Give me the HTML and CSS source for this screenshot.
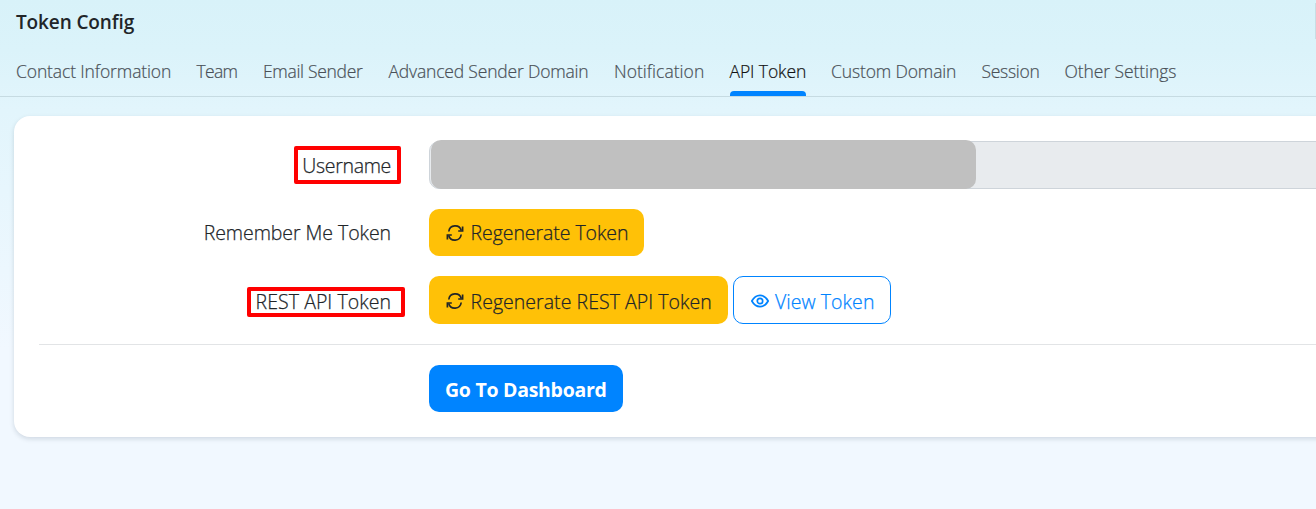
FILE: index.html
```html
<!DOCTYPE html>
<html lang="en">
<head>
<meta charset="utf-8">
<title>Token Config</title>
<link rel="stylesheet" href="styles.css">
</head>
<body>
<header class="header">
  <h1 class="title">Token Config</h1>
  <span class="header-action"></span>
</header>
<nav class="tabs">
  <a class="tab tab-contact">Contact Information</a>
  <a class="tab tab-team">Team</a>
  <a class="tab tab-email">Email Sender</a>
  <a class="tab tab-advanced">Advanced Sender Domain</a>
  <a class="tab tab-notification">Notification</a>
  <a class="tab tab-api active">API Token</a>
  <a class="tab tab-custom">Custom Domain</a>
  <a class="tab tab-session">Session</a>
  <a class="tab tab-other">Other Settings</a>
</nav>
<main class="card">
  <div class="row row-user">
    <span class="label label-user">Username<span class="mark mark-user"></span></span>
    <div class="input"><span class="mask"></span></div>
  </div>
  <div class="row row-remember">
    <span class="label label-remember">Remember Me Token</span>
    <button class="btn warning btn-remember"><svg class="icon" viewBox="0 0 18 16"><path d="M2.800 6.500A6.400 6.400 0 0 1 15.300 5.600M15.200 9.500A6.400 6.400 0 0 1 2.700 10.400"/><path d="M16.600 1.600V6H12.200M1.400 14.400V10H5.800"/></svg><span>Regenerate Token</span></button>
  </div>
  <div class="row row-rest">
    <span class="label label-rest">REST API Token<span class="mark mark-rest"></span></span>
    <button class="btn warning btn-rest"><svg class="icon" viewBox="0 0 18 16"><path d="M2.800 6.500A6.400 6.400 0 0 1 15.300 5.600M15.200 9.500A6.400 6.400 0 0 1 2.700 10.400"/><path d="M16.600 1.600V6H12.200M1.400 14.400V10H5.800"/></svg><span>Regenerate REST API Token</span></button>
    <button class="btn outline"><svg class="icon" viewBox="0 0 18 16"><path d="M.8 8Q4 2.400 9 2.400T17.200 8Q14 13.600 9 13.600T.8 8Z"/><circle cx="9" cy="8" r="2.700"/></svg><span>View Token</span></button>
  </div>
  <div class="footer">
    <button class="btn primary">Go To Dashboard</button>
  </div>
</main>
</body>
</html>
```
FILE: styles.css
```css
* { box-sizing: border-box; }
body {
  margin: 0;
  height: 509px;
  overflow: hidden;
  font-family: "Open Sans", "Noto Sans", sans-serif;
  font-weight: 300;
  color: #212529;
  background: linear-gradient(#d8f2f9 0, #dbf3fa 50px, #e2f5fc 110px, #f1f8ff 350px, #f1f8ff 100%);
}
.header { height: 48px; display: flex; justify-content: space-between; padding: 0 0 0 16px; }
.title { margin: 0; font-size: 19px; line-height: 45px; font-weight: 600; letter-spacing: -.12px; }
.header-action { width: 1px; height: 36px; margin-top: 3px; background: #c8dde4; }
.tabs { height: 49px; display: flex; gap: 25.5px; padding-left: 16px; border-bottom: 1px solid #c6dbe2; }
.tab { flex: none; height: 48px; line-height: 47px; font-size: 17.500px; color: #495057; white-space: nowrap; -webkit-text-stroke: .2px; }
.tab-contact { width: 155px; letter-spacing: -.12px; }
.tab-team { width: 41px; letter-spacing: -.7px; }
.tab-email { width: 100px; letter-spacing: -.31px; }
.tab-advanced { width: 200px; letter-spacing: -.18px; }
.tab-notification { width: 90px; letter-spacing: .03px; }
.tab-api { width: 76px; letter-spacing: -.1px; }
.tab-custom { width: 125px; letter-spacing: -.14px; }
.tab-session { width: 57.500px; letter-spacing: -.3px; }
.tab-other { width: 112px; letter-spacing: -.08px; }
.tab.active { display: flex; flex-direction: column; color: #111; }
.tab.active::after { content: ""; flex: none; height: 5px; margin-top: -4px; background: #0084ff; border-radius: 4px 4px 0 0; }
.card {
  margin: 19px -20px 0 14px;
  height: 321px;
  padding: 25px 0 0 25px;
  background: #fff;
  border-radius: 16px;
  box-shadow: 0 2px 5px rgba(0, 30, 50, .14);
}
.row { display: flex; height: 48px; }
.row-user { margin-bottom: 20px; }
.row-remember { height: 47px; margin-bottom: 20px; }
.label { position: relative; width: 352px; margin-right: 38px; line-height: 51px; font-size: 19.500px; text-align: right; white-space: nowrap; -webkit-text-stroke: .25px; }
.label-user { line-height: 50px; letter-spacing: -.32px; }
.label-remember { line-height: 48px; letter-spacing: -.06px; }
.label-rest { letter-spacing: .05px; }
.mark { position: absolute; border: 4px solid #f00; border-radius: 2px; }
.mark-user { left: 255px; top: 5px; width: 107px; height: 38px; }
.mark-rest { left: 208px; top: 11px; width: 158px; height: 30px; }
.input { flex: 1; height: 48px; border: 1px solid #ced4da; border-radius: 10px 0 0 10px; background: #e8ebee; }
.mask { display: block; width: 545px; height: 49px; margin: -2px 0 0 1px; border-radius: 10px; background: #c0c0c0; }
.btn {
  display: flex;
  align-items: center;
  gap: 6.500px;
  height: 100%;
  padding: 2px 0 0 17px;
  border: 0;
  border-radius: 10px;
  font: 300 19.500px "Open Sans", "Noto Sans", sans-serif;
  color: #212529;
  white-space: nowrap;
  -webkit-text-stroke: .25px;
}
.icon { width: 18px; height: 16px; fill: none; stroke: currentColor; stroke-width: 1.700; }
.warning { background: #ffc107; }
.btn-remember { width: 215px; padding-top: 0; letter-spacing: -.06px; }
.btn-rest { width: 299px; margin-right: 5px; letter-spacing: .04px; }
.outline { width: 158px; border: 1px solid #0084ff; background: #fff; color: #0084ff; padding: 2px 0 0 16.500px; letter-spacing: .06px; }
.footer { margin-top: 20px; border-top: 1px solid #e2e4e6; padding: 20px 0 0 390px; }
.primary { width: 194px; height: 47px; padding: 2px 0 0 16px; background: #0084ff; color: #fff; font-weight: 700; letter-spacing: -.28px; -webkit-text-stroke: 0; }
```
